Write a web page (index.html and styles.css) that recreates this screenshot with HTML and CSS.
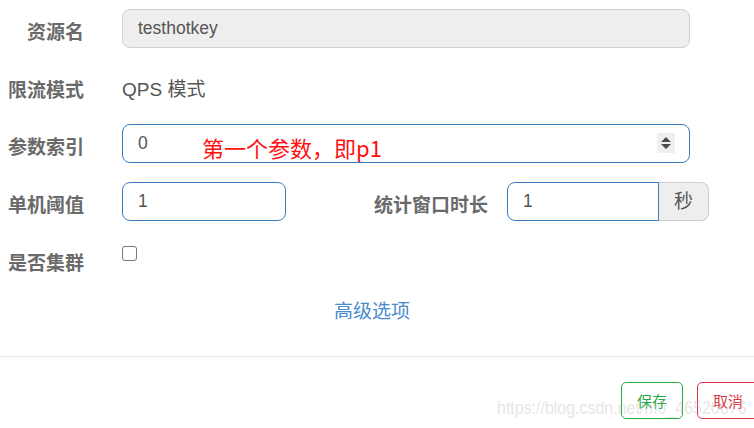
FILE: index.html
```html
<!DOCTYPE html>
<html lang="zh-CN">
<head>
<meta charset="utf-8">
<title>热点规则</title>
<link rel="stylesheet" href="styles.css">
</head>
<body>
<div class="form">
  <div class="row">
    <div class="label">资源名</div>
    <div class="control input disabled wide">testhotkey</div>
  </div>
  <div class="row row-static">
    <div class="label">限流模式</div>
    <div class="control static">QPS 模式</div>
  </div>
  <div class="row">
    <div class="label">参数索引</div>
    <div class="control input active wide number">
      <span>0</span>
      <span class="spinner">
        <svg width="12" height="14" viewBox="0 0 12 14"><path d="M6 1 L11 6 L1 6 Z M1 8 L11 8 L6 13 Z" fill="#4a4a4a"/></svg>
      </span>
      <span class="note">第一个参数，即p1</span>
    </div>
  </div>
  <div class="row">
    <div class="label">单机阈值</div>
    <div class="control input active narrow">1</div>
    <div class="label label-wide">统计窗口时长</div>
    <div class="group">
      <div class="input active group-input">1</div>
      <div class="addon">秒</div>
    </div>
  </div>
  <div class="row row-last">
    <div class="label">是否集群</div>
    <input class="control check" type="checkbox">
  </div>
  <div class="advanced"><a class="link">高级选项</a></div>
  <div class="divider"></div>
  <div class="footer">
    <button class="btn btn-save">保存</button>
    <button class="btn btn-cancel">取消</button>
  </div>
</div>
<div class="watermark">https://blog.csdn.net/m0_46520676</div>
</body>
</html>
```

FILE: styles.css
```css
html, body {
  margin: 0;
  padding: 0;
  background: #fff;
}
body {
  width: 754px;
  height: 428px;
  overflow: hidden;
  position: relative;
  font-family: "Liberation Sans", "Noto Sans CJK SC", sans-serif;
  color: #555;
}
.form {
  padding-top: 9px;
}
.row {
  display: flex;
  align-items: flex-start;
  height: 39px;
  margin-bottom: 19px;
}
.row-static {
  height: 38px;
}
.row-last {
  margin-bottom: 0;
}
.label {
  width: 84px;
  flex: none;
  text-align: right;
  font-size: 19px;
  font-weight: bold;
  color: #6a6a6a;
  line-height: 39px;
  padding-top: 4px;
  box-sizing: border-box;
  white-space: nowrap;
}
.label-wide {
  width: 202px;
}
.control {
  margin-left: 38px;
}
.input {
  box-sizing: border-box;
  height: 39px;
  border: 1px solid #ccc;
  border-radius: 8px;
  padding-left: 15px;
  font-size: 17.5px;
  line-height: 37px;
  color: #555;
  background: #fff;
}
.disabled {
  background: #eee;
  border-color: #cfcfcf;
}
.active {
  border-color: #3a7cbc;
}
.wide {
  width: 568px;
}
.narrow {
  width: 164px;
}
.number {
  position: relative;
}
.spinner {
  position: absolute;
  right: 14px;
  top: 8px;
  width: 18px;
  height: 20px;
  background: #efefef;
  display: flex;
  align-items: center;
  justify-content: center;
}
.spinner svg {
  display: block;
}
.note {
  position: absolute;
  left: 79px;
  top: 9px;
  font-family: "Noto Sans CJK SC", sans-serif;
  font-size: 22px;
  line-height: 26px;
  color: #ff1010;
  white-space: nowrap;
}
.static {
  font-size: 19px;
  line-height: 38px;
  padding-top: 4px;
  color: #555;
}
.group {
  display: flex;
  margin-left: 19px;
  width: 202px;
}
.group-input {
  width: 152px;
  border-radius: 8px 0 0 8px;
}
.addon {
  box-sizing: border-box;
  width: 50px;
  height: 39px;
  background: #eee;
  border: 1px solid #ccc;
  border-left: none;
  border-radius: 0 8px 8px 0;
  text-align: center;
  font-size: 19px;
  line-height: 37px;
  color: #555;
}
.check {
  appearance: none;
  -webkit-appearance: none;
  width: 15px;
  height: 15px;
  margin-top: 6px;
  margin-bottom: 0;
  margin-right: 0;
  border: 1px solid #777;
  border-radius: 3px;
  background: #fff;
  box-sizing: border-box;
}
.advanced {
  margin-top: 21px;
  padding-right: 10px;
  text-align: center;
  font-size: 19px;
  line-height: 24px;
}
.link {
  color: #4a8bcc;
  text-decoration: none;
}
.divider {
  margin-top: 32px;
  height: 1px;
  background: #e5e5e5;
}
.footer {
  display: flex;
  justify-content: flex-end;
  gap: 14px;
  margin-top: 25px;
  margin-right: -5px;
}
.btn {
  box-sizing: border-box;
  width: 62px;
  height: 37px;
  background: #fff;
  border: 1px solid;
  border-radius: 5px;
  font-family: "Noto Sans CJK SC", sans-serif;
  font-size: 15px;
  padding: 0;
  flex: none;
}
.btn-save {
  color: #28a745;
  border-color: #28a745;
}
.btn-cancel {
  color: #dc3545;
  border-color: #dc3545;
}
.watermark {
  position: absolute;
  left: 497px;
  top: 397px;
  font-size: 19px;
  line-height: 22px;
  color: rgba(190, 190, 190, 0.4);
  transform: scaleX(0.84);
  transform-origin: left top;
  white-space: nowrap;
}
```
